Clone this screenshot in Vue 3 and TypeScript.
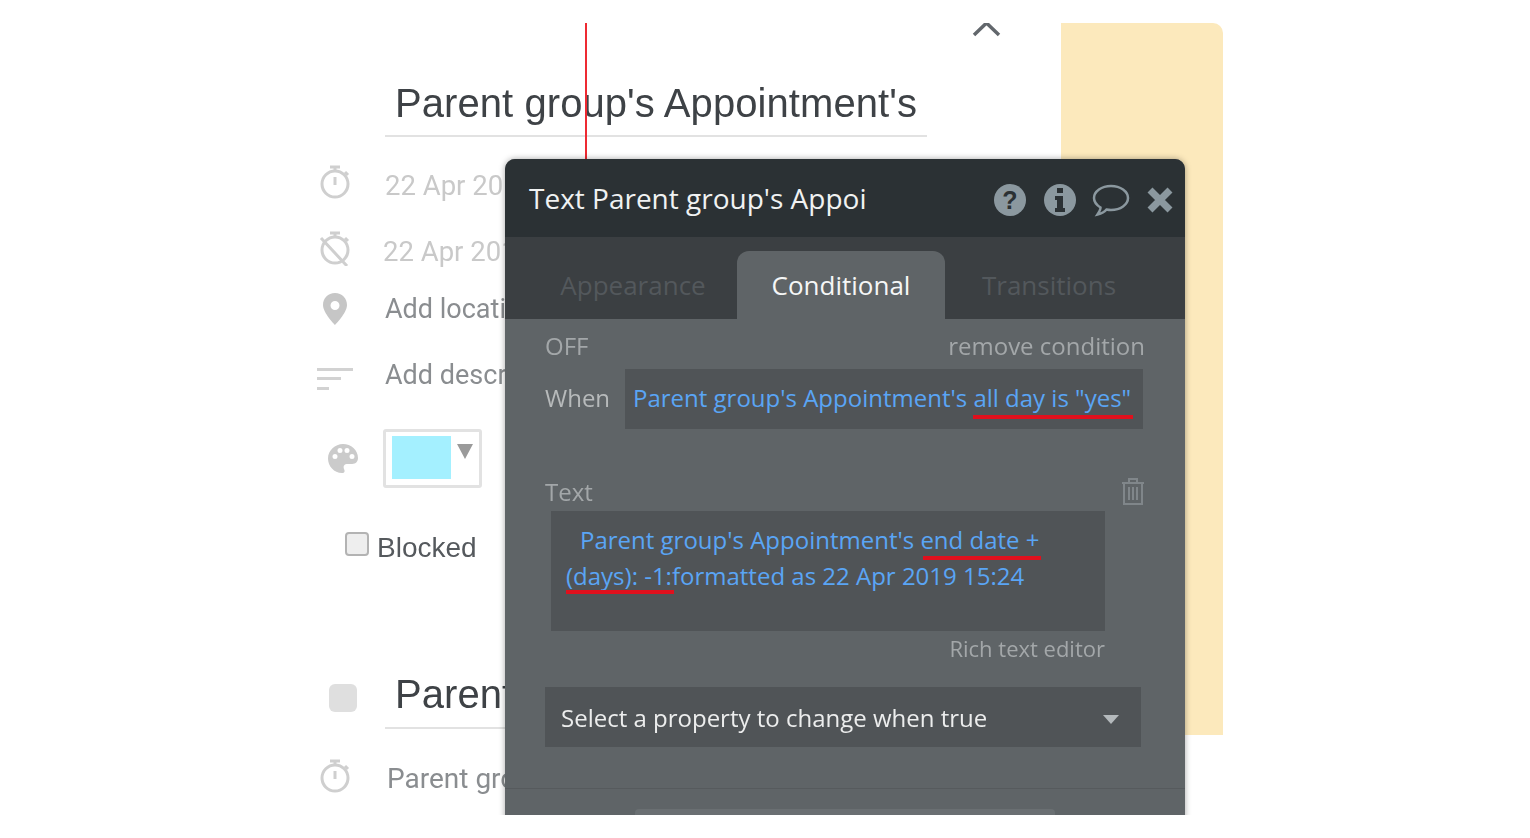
<script setup lang="ts">
interface Row { icon: string; text: string; cls: string }
const rows: Row[] = [
  { icon: 'start', text: '22 Apr 2019 15:24', cls: 'r-start' },
  { icon: 'end', text: '22 Apr 2019 15:24', cls: 'r-end' },
  { icon: 'pin', text: 'Add location', cls: 'r-loc' },
  { icon: 'lines', text: 'Add description', cls: 'r-desc' },
]
const tabs: string[] = ['Appearance', 'Conditional', 'Transitions']
</script>

<template>
  <div class="stage">
    <div class="canvas">
      <section class="form">
        <svg class="chevron" width="30" height="20" viewBox="0 0 30 20"><path d="M2 15 L14.500 3 L27 15" fill="none" stroke="#62676c" stroke-width="3.500" /></svg>
        <h1 class="title">Parent group's Appointment's</h1>
        <div v-for="row in rows" :key="row.cls" class="row" :class="row.cls">
          <span class="ico">
            <svg v-if="row.icon === 'start'" width="32" height="36" viewBox="0 0 32 36"><g fill="none" stroke="#cfcfcf" stroke-width="3"><circle cx="16" cy="20" r="13" /><path d="M11 3h10M16 3v4M16 13v8M26 8l3 3" /></g></svg>
            <svg v-else-if="row.icon === 'end'" width="34" height="36" viewBox="0 0 34 36"><g fill="none" stroke="#cfcfcf" stroke-width="3"><circle cx="17" cy="20" r="13" /><path d="M12 3h10M17 3v4M3 8l26 28M27 8l3 3" /></g></svg>
            <svg v-else-if="row.icon === 'pin'" width="24" height="32" viewBox="0 0 24 32"><path fill="#c6c6c6" fill-rule="evenodd" d="M12 0C5 0 0 5 0 12c0 8 12 20 12 20s12-12 12-20C24 5 19 0 12 0zm0 8a4.500 4.500 0 1 1 0 9 4.500 4.500 0 0 1 0-9z" /></svg>
            <svg v-else width="36" height="24" viewBox="0 0 36 24"><path fill="#d2d2d2" d="M0 1h36v3H0zM0 10h24v3H0zM0 20h12v3H0z" /></svg>
          </span>
          <span class="row-text">{{ row.text }}</span>
        </div>
        <div class="color-row">
          <svg class="palette" width="30" height="30" viewBox="0 0 30 30"><path fill="#cbcbcb" fill-rule="evenodd" d="M15 0C7 0 0 6.500 0 14.500 0 22 6 29 14 29c3 0 3-2 2-4-1-3 0-5 4-5h4c4 0 6-3 6-6C30 6 23 0 15 0zM7 15a2.500 2.500 0 1 1 0-5 2.500 2.500 0 0 1 0 5zm5-6a2.500 2.500 0 1 1 0-5 2.500 2.500 0 0 1 0 5zm7 0a2.500 2.500 0 1 1 0-5 2.500 2.500 0 0 1 0 5zm5 6a2.500 2.500 0 1 1 0-5 2.500 2.500 0 0 1 0 5z" /></svg>
          <div class="swatch-box">
            <span class="swatch"></span>
            <span class="swatch-caret"></span>
          </div>
        </div>
        <label class="blocked"><span class="check"></span><span>Blocked</span></label>
        <div class="second-head">
          <span class="grey-square"></span>
          <h2 class="title second">Parent group's Appointment's</h2>
        </div>
        <div class="row r-last">
          <span class="ico"><svg width="32" height="36" viewBox="0 0 32 36"><g fill="none" stroke="#cfcfcf" stroke-width="3"><circle cx="16" cy="20" r="13" /><path d="M11 3h10M16 3v4M16 13v8M26 8l3 3" /></g></svg></span>
          <span class="row-text dark">Parent group's Appointment's</span>
        </div>
      </section>
      <aside class="note"></aside>
      <span class="red-line"></span>

      <div class="popup">
        <header class="pop-head">
          <span class="pop-title">Text Parent group's Appoi</span>
          <div class="pop-icons">
            <svg width="34" height="34" viewBox="0 0 34 34"><circle cx="17" cy="17" r="16" fill="#8b989f" /><text x="17" y="26" text-anchor="middle" font-family="Liberation Sans, sans-serif" font-weight="700" font-size="25" fill="#2b3134">?</text></svg>
            <svg width="34" height="34" viewBox="0 0 34 34"><circle cx="17" cy="17" r="16" fill="#8b989f" /><path fill="#2b3134" d="M14 5h6v5h-6zM12 13h8v12h2v4H12v-4h2v-8h-2z" /></svg>
            <svg width="38" height="34" viewBox="0 0 38 34"><path fill="none" stroke="#8b989f" stroke-width="2.500" d="M19 3C9.500 3 2 8.500 2 15c0 4 2.500 7 6.500 9.500 0 2-1 4-3 7 4-1 7-2.500 9-5 1.500.3 3 .5 4.500.5 9.500 0 17-5.500 17-12S28.500 3 19 3z" /></svg>
            <svg width="26" height="26" viewBox="0 0 26 26"><path stroke="#8b989f" stroke-width="7" d="M3 3l20 20M23 3L3 23" /></svg>
          </div>
        </header>
        <nav class="pop-tabs">
          <span v-for="(t, i) in tabs" :key="t" class="tab" :class="{ active: i === 1 }">{{ t }}</span>
        </nav>
        <div class="pop-body">
          <div class="off-row"><span>OFF</span><span>remove condition</span></div>
          <div class="when-row">
            <span class="when">When</span>
            <div class="field when-field">Parent group's Appointment's all day is "yes"<i class="mark m1"></i></div>
          </div>
          <div class="text-label">
            <span>Text</span>
            <svg width="24" height="28" viewBox="0 0 24 28"><g fill="none" stroke="#80868a" stroke-width="2"><path d="M1 6h22M8 6V2h8v4M3 6v21h18V6M8 10v13M12 10v13M16 10v13" /></g></svg>
          </div>
          <div class="field text-field">
            <span class="indent">Parent group's Appointment's end date +</span><br />(days): -1:formatted as 22 Apr 2019 15:24
            <i class="mark m2"></i><i class="mark m3"></i>
          </div>
          <div class="rich">Rich text editor</div>
          <div class="select"><span>Select a property to change when true</span><i class="select-caret"></i></div>
          <div class="pop-foot"><span class="foot-btn"></span></div>
        </div>
      </div>
    </div>
  </div>
</template>

<style>
html, body { margin: 0; background: #fff; }
</style>

<style scoped>
.stage { width: 1530px; height: 838px; background: #fff; overflow: hidden; }
.canvas { position: relative; height: 792px; margin-top: 23px; overflow: hidden; display: flex; padding-left: 310px; box-sizing: border-box; font-family: Roboto, "Liberation Sans", sans-serif; filter: blur(0.5px); }
.form { position: relative; width: 751px; flex: none; }
.note { width: 162px; height: 712px; background: #fce9bc; border-top-right-radius: 10px; flex: none; }
.chevron { position: absolute; left: 662px; top: -3px; }
.title { margin: 55px 0 0 75px; width: 542px; box-sizing: border-box; padding: 0 0 7px 10px; border-bottom: 2px solid #e2e2e2; font: 400 40px/50px "Liberation Sans", Arial, sans-serif; letter-spacing: .07px; color: #3e4246; white-space: nowrap; overflow: hidden; }
.row { display: flex; align-items: center; height: 40px; }
.ico { width: 75px; display: flex; justify-content: center; padding-right: 25px; box-sizing: border-box; flex: none; }
.row-text { font-size: 27.500px; color: #c9c9c9; white-space: nowrap; max-width: 120px; overflow: hidden; }
.r-start { margin-top: 25px; }
.r-end { margin-top: 26px; }
.r-start .row-text, .r-end .row-text { margin-top: 6px; }
.r-end .row-text { margin-left: -2px; max-width: 122px; }
.r-loc { margin-top: 21px; }
.r-loc .row-text, .r-desc .row-text, .dark { color: #8a8d90; font-size: 27px; }
.r-desc { margin-top: 26px; }
.r-desc .ico { padding-top: 8px; }
.color-row { display: flex; align-items: center; margin: 34px 0 0 18px; }
.palette { margin-right: 25px; }
.swatch-box { width: 99px; height: 59px; box-sizing: border-box; border: 3px solid #e2e2e2; border-radius: 3px; position: relative; padding: 4px 6px; }
.swatch { display: block; width: 59px; height: 43px; background: #a4f0ff; }
.swatch-caret { position: absolute; right: 6px; top: 12px; border-style: solid; border-width: 15px 8.500px 0; border-color: #9a9a9a transparent transparent; }
.blocked { display: flex; align-items: center; margin: 40px 0 0 35px; font: 400 28px/40px "Liberation Sans", Arial, sans-serif; color: #55595d; }
.check { width: 20px; height: 20px; border: 2px solid #b3b3b3; border-radius: 4px; background: #eee; margin: -8px 8px 0 0; }
.second-head { display: flex; margin-top: 101px; }
.grey-square { width: 28px; height: 28px; background: #dfdfdf; border-radius: 6px; margin: 15px 0 0 19px; flex: none; }
.title.second { margin: 0 0 0 28px; width: 120px; padding-bottom: 8px; }
.r-last { margin-top: 27px; }
.r-last .row-text { margin: 4px 0 0 2px; font-size: 28px; }
.red-line { position: absolute; left: 585px; top: 0; width: 2px; height: 136px; background: #ee2a32; }
.popup { position: absolute; left: 505px; top: 136px; width: 680px; height: 700px; border-radius: 10px 10px 0 0; overflow: hidden; box-shadow: 0 0 6px rgba(0,0,0,.35); font-family: "Open Sans", sans-serif; background: #5f6467; }
.pop-head { height: 78px; background: #2b3134; display: flex; align-items: center; justify-content: space-between; padding: 0 12px 0 24px; }
.pop-title { font-size: 28px; color: #f0f2f2; }
.pop-icons { display: flex; align-items: center; gap: 16px; padding-top: 4px; }
.pop-icons svg:nth-child(3) { margin-left: -1px; margin-right: 1px; }
.pop-tabs { height: 82px; box-sizing: border-box; padding-top: 14px; background: #3b3f42; display: flex; }
.tab { height: 68px; line-height: 68px; text-align: center; font-size: 26px; color: #53585c; box-sizing: border-box; }
.tab:nth-child(1) { width: 232px; padding-left: 24px; }
.tab:nth-child(2) { width: 208px; }
.tab:nth-child(3) { width: 208px; }
.tab.active { background: #5f6467; color: #f5f6f6; border-radius: 12px 12px 0 0; }
.pop-body { padding: 0 40px; position: relative; font-size: 24px; color: #a3a7a9; }
.off-row { display: flex; justify-content: space-between; height: 50px; line-height: 54px; }
.when-row { display: flex; align-items: center; }
.when { width: 80px; color: #b7babb; flex: none; margin-top: -4px; }
.field { color: #5aa5f5; background: #505457; position: relative; }
.when-field { width: 518px; height: 60px; line-height: 57px; padding-left: 8px; box-sizing: border-box; white-space: nowrap; }
.text-label { display: flex; justify-content: space-between; align-items: center; margin-top: 44px; height: 38px; }
.text-label span { margin-top: -2px; }
.text-label svg { margin-top: -3px; }
.text-field { width: 554px; height: 120px; margin-left: 6px; padding: 11px 0 0 15px; box-sizing: border-box; line-height: 36px; white-space: nowrap; }
.indent { padding-left: 14px; }
.mark { position: absolute; height: 4px; background: #e0101d; }
.m1 { left: 348px; top: 46px; width: 160px; }
.m2 { left: 372px; top: 45px; width: 118px; }
.m3 { left: 15px; top: 79px; width: 108px; }
.rich { width: 560px; text-align: right; height: 56px; line-height: 34px; font-size: 22px; }
.select { width: 596px; height: 60px; background: #505457; color: #eceded; display: flex; align-items: center; justify-content: space-between; padding: 0 22px 0 16px; box-sizing: border-box; }
.select-caret { border-style: solid; border-width: 9px 8px 0; border-color: #b4b9bc transparent transparent; margin-top: 4px; }
.pop-foot { margin: 41px -40px 0; border-top: 1px solid #565a5d; height: 60px; padding: 20px 0 0 130px; box-sizing: border-box; }
.foot-btn { display: block; width: 420px; height: 20px; background: #6a6f72; border-radius: 4px; }
</style>
